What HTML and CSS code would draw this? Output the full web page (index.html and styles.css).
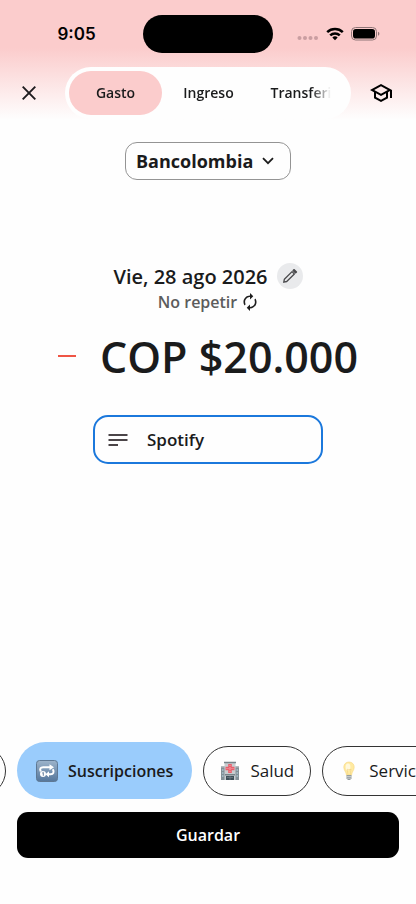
FILE: index.html
```html
<!DOCTYPE html>
<html lang="es">
<head>
<meta charset="utf-8">
<meta name="viewport" content="width=device-width, initial-scale=1">
<title>Gasto</title>
<link rel="stylesheet" href="styles.css">
</head>
<body>
<div class="app">
  <header class="top">
    <div class="status">
      <span class="clock">9:05</span>
      <span class="island"></span>
      <span class="signals">
        <svg width="22" height="18" viewBox="0 0 22 18" fill="#c99ea1"><circle cx="2.5" cy="13" r="2"/><circle cx="8" cy="13" r="2"/><circle cx="13.500" cy="13" r="2"/><circle cx="19" cy="13" r="2"/></svg>
        <svg width="18" height="14" viewBox="0 0 18 14" fill="none" stroke="#000" stroke-width="2.500"><path d="M1.200 5.200a11.300 11.300 0 0 1 15.600 0M4.200 8.300a7 7 0 0 1 9.600 0"/><path d="M9 13.300 6.300 10.600a4 4 0 0 1 5.400 0z" fill="#000" stroke="none"/></svg>
        <svg width="29" height="14" viewBox="0 0 29 14"><rect x=".5" y=".5" width="25" height="12.500" rx="4" fill="none" stroke="#8e7476"/><rect x="2" y="2" width="22" height="9.500" rx="2.800"/><path d="M27 4.800q1.400.6 1.400 2t-1.400 2z" fill="#8e7476"/></svg>
      </span>
    </div>
    <nav class="bar">
      <button class="icon-btn" aria-label="Cerrar"><svg width="24" height="24" viewBox="0 0 24 24" fill="none" stroke="#1d1b1e" stroke-width="1.900"><path d="M5.700 5.700l12.600 12.600M18.300 5.700 5.700 18.300"/></svg></button>
      <div class="tabs">
        <div class="tab-list" role="tablist">
          <button class="tab active" role="tab" aria-selected="true">Gasto</button>
          <button class="tab" role="tab" aria-selected="false">Ingreso</button>
          <button class="tab wide" role="tab" aria-selected="false">Transferir</button>
        </div>
      </div>
      <button class="icon-btn" aria-label="Tutorial"><svg width="24" height="24" viewBox="0 0 24 24"><path d="M12 3 1 9l4 2.180v6L12 21l7-3.820v-6l2-1.090V17h2V9L12 3zm6.820 6L12 12.720 5.180 9 12 5.280 18.820 9zM17 15.990l-5 2.730-5-2.730v-3.720L12 15l5-2.730v3.720z"/></svg></button>
    </nav>
  </header>

  <main class="content">
    <div class="account">
      <select class="account-select" aria-label="Cuenta"><option>Bancolombia</option></select>
      <svg class="chevron" width="12" height="8" viewBox="0 0 12 8" fill="none" stroke="#1d1d1d" stroke-width="1.800"><path d="M1 1.200l5 5 5-5"/></svg>
    </div>

    <div class="date-row">
      <span class="date">Vie, 28 ago 2026</span>
      <button class="edit" aria-label="Editar fecha"><svg width="16" height="16" viewBox="0 0 18 18" fill="none" stroke="#4a4a4c" stroke-width="1.500" stroke-linejoin="round"><path d="M2 16l.7-3.400 8.600-8.500 2.600 2.600-8.600 8.500z"/><path d="M12.500 2.900l1.200-1.100 2.600 2.600-1.200 1.100z" fill="#4a4a4c"/></svg></button>
    </div>
    <button class="repeat">No repetir
      <svg width="16" height="18" viewBox="3 1 18 22" fill="#1d1d1d"><path d="M12 6v3l4-4-4-4v3c-4.420 0-8 3.580-8 8 0 1.570.46 3.030 1.240 4.260L6.700 14.800A5.870 5.870 0 0 1 6 12c0-3.310 2.690-6 6-6zm6.760 1.740L17.300 9.200c.44.840.7 1.790.7 2.800 0 3.310-2.690 6-6 6v-3l-4 4 4 4v-3c4.420 0 8-3.580 8-8 0-1.570-.46-3.030-1.240-4.260z"/></svg>
    </button>

    <div class="amount-row">
      <span class="minus"></span>
      <span class="amount">COP $20.000</span>
    </div>

    <label class="note">
      <svg width="20" height="14" viewBox="0 0 20 14" fill="none" stroke="#4b4548" stroke-width="2"><path d="M.5 2h19M.5 7h19M.5 12H10"/></svg>
      <input class="note-input" type="text" value="Spotify" aria-label="Descripción">
    </label>
  </main>

  <footer class="bottom">
    <div class="chips">
      <button class="chip stub" aria-label="Categoría anterior"></button>
      <button class="chip selected">
        <svg width="22" height="22" viewBox="0 0 22 22"><defs><linearGradient id="tile" x1="0" y1="0" x2="0" y2="1"><stop offset="0" stop-color="#9db4cb"/><stop offset="1" stop-color="#54769b"/></linearGradient></defs><rect x=".5" y=".5" width="21" height="21" rx="3" fill="url(#tile)" stroke="#5e7894"/><path d="M4.800 11.500c-1.500-2.700-.2-4.300 2.300-4.300H14M16.800 9.300c1.800 3 .3 4.900-2 4.900h-3" fill="none" stroke="#fff" stroke-width="2"/><path d="M13.500 4.200l4.500 3-4.500 3zM13 11.200 9.500 14.200 13 17.200z" fill="#fff"/><circle cx="7" cy="14" r="3" fill="#fff"/><path d="M6.300 13.100l1-.7v3.400" fill="none" stroke="#56718e" stroke-width=".9"/></svg>
        <span>Suscripciones</span>
      </button>
      <button class="chip">
        <svg width="20" height="20" viewBox="0 0 20 20"><path d="M1 5.500h5V19H1zM14 5.500h5V19h-5z" fill="#829097"/><path d="M1 5h4v1.500H1zM15 5h4v1.500h-4z" fill="#b3babd"/><path d="M4.500 1h11v18h-11z" fill="#c8cdd0"/><path d="M4 .7h12v1.500H4zM5 13h10v1.500H5z" fill="#778389"/><path d="M6 15h8v4H6z" fill="#3f5059"/><path d="M10 15v4M7 16.500h6" stroke="#718087" stroke-width=".7"/><path d="M10 3v9M5.500 7.500h9" stroke="#e95f6c" stroke-width="3.600"/><path d="M10 4v7M6.500 7.500h7" stroke="#f6b5bb" stroke-width=".8" stroke-dasharray="1 1"/><path d="M2 9h1.500M2 12h1.500M2 15h1.500M16.500 9H18M16.500 12H18M16.500 15H18" stroke="#a9c3ce" stroke-width="1.300"/></svg>
        <span>Salud</span>
      </button>
      <button class="chip">
        <svg width="20" height="20" viewBox="0 0 20 20"><path d="M10 1c-3.200 0-5.200 2.300-5.200 5.200 0 3.100 2.300 4.400 2.700 8h5c.4-3.600 2.700-4.900 2.700-8C15.200 3.300 13.200 1 10 1z" fill="#ffeaa1" stroke="#f7d57c" stroke-width=".6"/><ellipse cx="9" cy="6" rx="2.400" ry="3.600" fill="#fff8dc"/><path d="M9 14 8.200 8l1.200 1 .7-1 .7 1 1.200-1-.8 6" fill="none" stroke="#edcc7c" stroke-width=".5"/><path d="M7.500 14h5v3.500l-1.500 1.500H9l-1.500-1.500z" fill="#959da0"/><path d="M7.500 15.500h5M7.700 17.200h4.600" stroke="#dadddd" stroke-width=".7"/></svg>
        <span>Servicios</span>
      </button>
    </div>
    <button class="save">Guardar</button>
  </footer>
</div>
</body>
</html>
```
FILE: styles.css
```css
* {
  box-sizing: border-box;
}

body {
  margin: 0;
  background: #fefefe;
  color: #1a1b1c;
  font-family: "Open Sans", "Noto Sans", sans-serif;
}

button,
input,
select {
  margin: 0;
  padding: 0;
  border: 0;
  background: none;
  color: inherit;
  font: inherit;
}

svg {
  display: block;
  flex: none;
}

.app {
  display: flex;
  flex-direction: column;
  min-height: 100vh;
  overflow: hidden;
  background: linear-gradient(#fbcccc 0, #fbcccc 48px, #fefefe 120px);
}

/* Status bar */
.status {
  display: grid;
  grid-template-columns: 1fr 130px 1fr;
  align-items: center;
  height: 67px;
}

.clock {
  padding-left: 10px;
  color: #000;
  font-family: Inter, sans-serif;
  font-size: 17px;
  font-weight: 600;
  text-align: center;
}

.island {
  height: 38px;
  border-radius: 20px;
  background: #000;
}

.signals {
  display: flex;
  align-items: center;
  gap: 7px;
  padding-left: 24px;
}

/* Top bar with the transaction type tabs */
.bar {
  display: grid;
  grid-template-columns: 58px minmax(0, 1fr) 60px;
  align-items: center;
  padding-right: 5px;
}

.icon-btn {
  display: flex;
  align-items: center;
  justify-content: center;
  height: 52px;
}

.tabs {
  margin-left: 7px;
  padding: 4px 20px 4px 4px;
  border-radius: 26px;
  background: #fefefe;
}

.tab-list {
  display: flex;
  overflow: hidden;
  mask-image: linear-gradient(to right, #000 calc(100% - 20px), transparent);
}

.tab {
  flex: none;
  width: 93px;
  height: 44px;
  padding-bottom: 2px;
  border-radius: 22px;
  font-size: 14px;
  font-weight: 600;
}

.tab.active {
  background: #fbcccc;
}

.tab.wide {
  width: 98px;
}

/* Form */
.content {
  display: flex;
  flex: 1;
  flex-direction: column;
  align-items: center;
  padding-top: 23px;
}

.account {
  display: grid;
  align-items: center;
  margin-bottom: 83px;
}

.account-select {
  grid-area: 1 / 1;
  height: 38px;
  padding: 0 36px 0 10px;
  border: 1px solid #949494;
  border-radius: 12px;
  appearance: none;
  font-size: 18px;
  font-weight: 700;
}

.chevron {
  grid-area: 1 / 1;
  justify-self: end;
  margin-right: 17px;
  pointer-events: none;
}

.date-row {
  display: flex;
  align-items: center;
  gap: 9px;
  height: 26px;
}

.date {
  font-size: 20px;
  font-weight: 600;
}

.edit {
  display: flex;
  align-items: center;
  justify-content: center;
  width: 26px;
  height: 26px;
  border-radius: 50%;
  background: #e9eaec;
}

.repeat {
  display: flex;
  align-items: center;
  gap: 5px;
  height: 26px;
  color: #5c5c5c;
  font-size: 16px;
  font-weight: 600;
}

.amount-row {
  display: flex;
  align-items: center;
  gap: 24px;
  height: 56px;
  margin: 13px 0 31px;
}

.minus {
  width: 18px;
  height: 2px;
  background: #ef5545;
}

.amount {
  font-size: 43px;
  font-weight: 600;
  white-space: nowrap;
}

.note {
  display: flex;
  align-items: center;
  gap: 19px;
  width: 230px;
  max-width: 100%;
  height: 49px;
  padding: 0 13px;
  border: 2px solid #1b78dc;
  border-radius: 15px;
}

.note-input {
  flex: 1;
  min-width: 0;
  outline: none;
  font-size: 17px;
  font-weight: 600;
}

/* Categories and save action */
.bottom {
  padding: 0 17px 46px;
}

.chips {
  display: flex;
  align-items: center;
  gap: 11px;
  margin: 0 -17px 13px -75px;
}

.chip {
  display: flex;
  flex: none;
  align-items: center;
  gap: 10px;
  height: 50px;
  padding: 0 16px;
  border: 1px solid #343434;
  border-radius: 29px;
  font-size: 17px;
}

.chip.stub {
  width: 64px;
}

.chip.selected {
  height: 57px;
  padding: 0 19px;
  border: 0;
  background: #9accfc;
  font-size: 16px;
  font-weight: 600;
}

.save {
  display: block;
  width: 100%;
  height: 46px;
  border-radius: 11px;
  background: #000;
  color: #fff;
  font-size: 16px;
  font-weight: 600;
}
```
